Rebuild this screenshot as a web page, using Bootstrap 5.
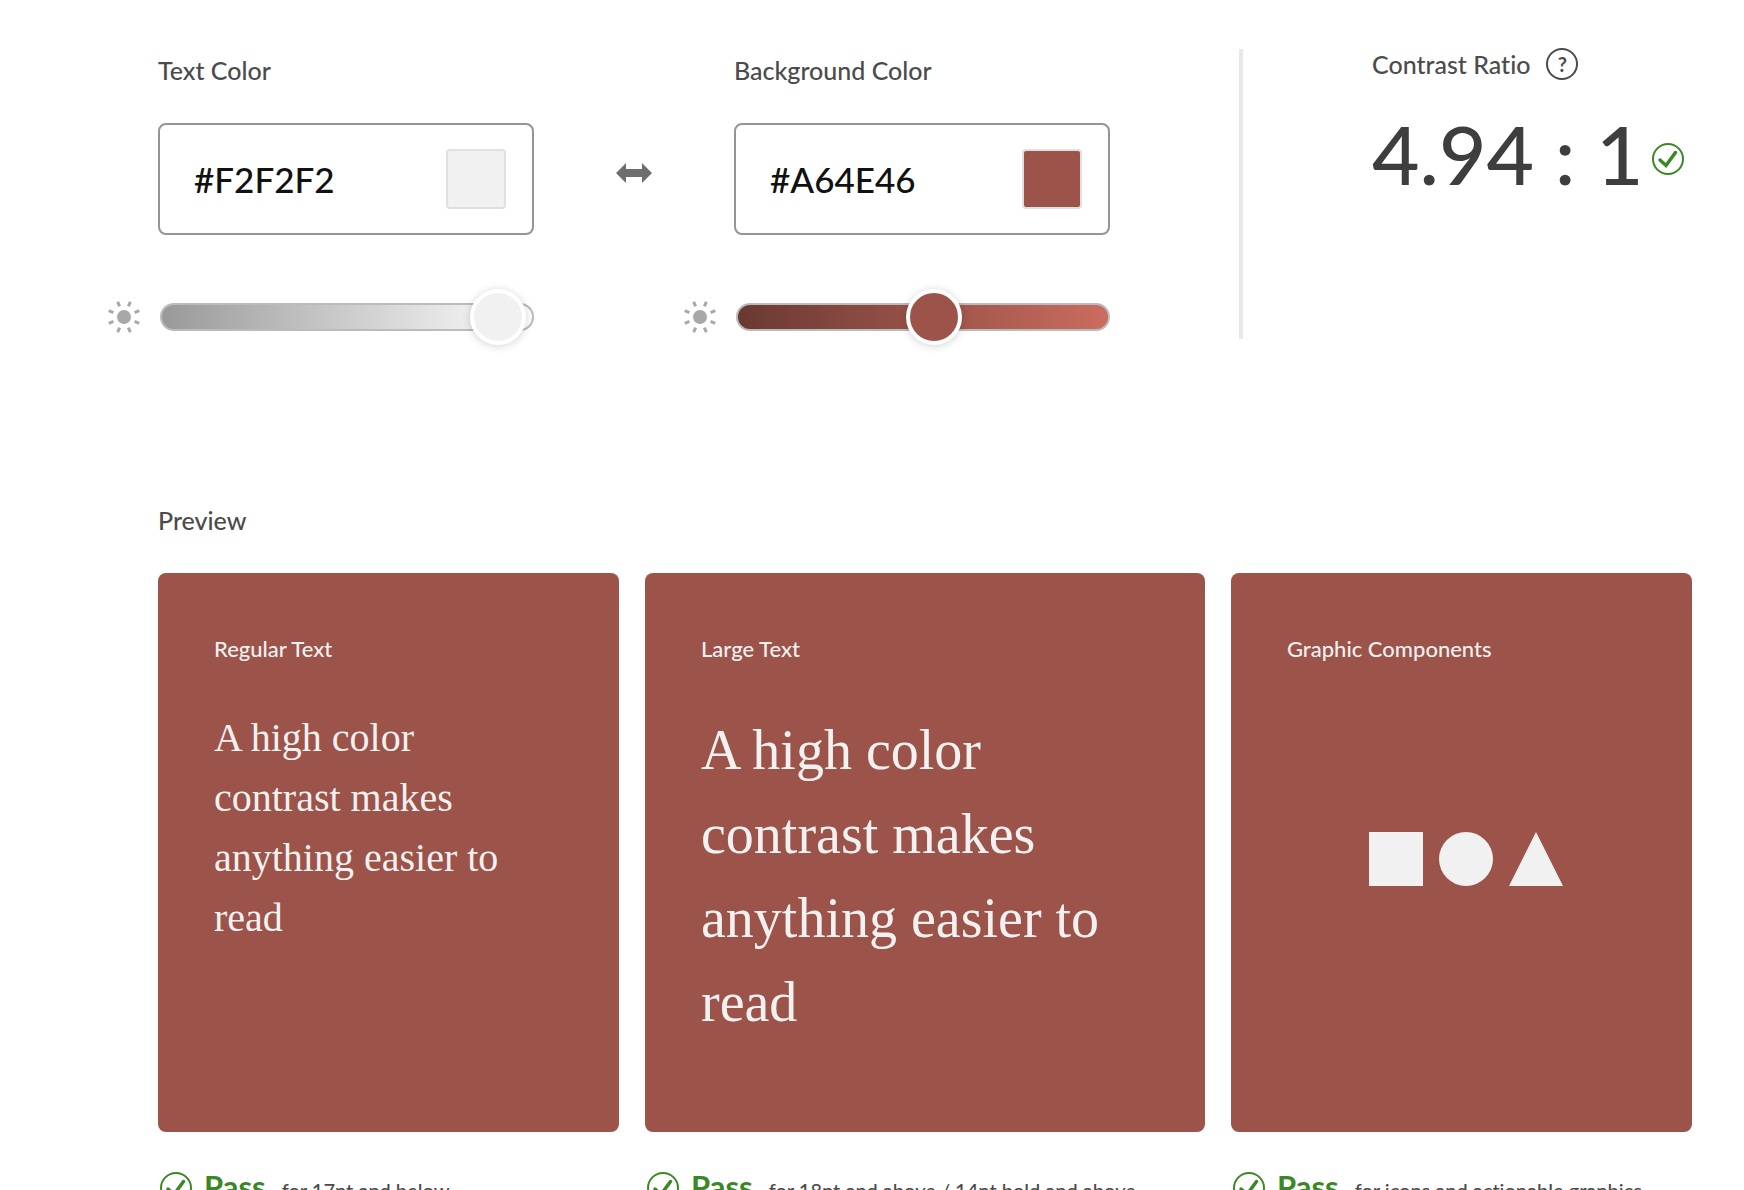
<!DOCTYPE html>
<html lang="en">
<head>
<meta charset="utf-8">
<meta name="viewport" content="width=device-width, initial-scale=1">
<title>Contrast Checker</title>
<link href="https://cdn.jsdelivr.net/npm/bootstrap@5.3.0/dist/css/bootstrap.min.css" rel="stylesheet">
<style>
  :root { --text-pick: #f1f1f1; --bg-pick: #9c5349; --pass: #3a8824; }
  body { font-family: Lato, "Open Sans", sans-serif; font-weight: 500; font-variant-ligatures: none; color: #4b4b4b; background: #fff; font-size: 20px; overflow-x: hidden; }
  .checker { padding: 49px 52px 24px 108px; }
  .controls { display: grid; grid-template-columns: 426fr 150px 426fr 129px 4px 129px 320fr; }
  .caption { font-size: 25px; line-height: 30px; font-weight: 500; margin: 0; }
  .picker .caption { line-height: 42px; margin: 0 0 32px 50px; display: block; }
  .hex-box { height: 112px; margin-left: 50px; padding: 0 26px 0 34px; border: 2px solid #959595; border-radius: 8px; }
  .hex-box .form-control { font-size: 35px; font-weight: 500; line-height: 48px; color: #111; border: 0; padding: 0; min-width: 0; box-shadow: none; background: transparent; }
  .swatch { width: 60px; height: 60px; padding: 0; border: 2px solid #e0e0e0; border-radius: 4px; flex: none; }
  .swatch-text { background: var(--text-pick); }
  .swatch-bg { background: var(--bg-pick); }
  .brightness { margin-top: 54px; gap: 20px; }
  .brightness svg { width: 32px; height: 32px; flex: none; }
  .form-range { height: 56px; flex: 1; min-width: 0; }
  .form-range::-webkit-slider-runnable-track { height: 28px; border: 2px solid #bbb; border-radius: 14px; background: var(--track); }
  .form-range::-webkit-slider-thumb { width: 56px; height: 56px; margin-top: -16px; border: 4px solid #fff; border-radius: 50%; background: var(--knob); box-shadow: 0 1px 8px rgba(0,0,0,.18); }
  .form-range::-webkit-slider-thumb:active { background: var(--knob); }
  .range-text { --track: linear-gradient(90deg, #999, #fff); --knob: var(--text-pick); }
  .range-bg { --track: linear-gradient(90deg, #693932, #cb6c5f); --knob: var(--bg-pick); }
  .swap { margin: 104px 0 0 50px; height: 40px; }
  .divider { background: #e8e8e8; margin-bottom: 6px; }
  .help { width: 32px; height: 32px; border: 2px solid #4b4b4b; border-radius: 50%; background: none; color: #4b4b4b; font-size: 20px; line-height: 28px; font-weight: 700; padding: 0; }
  .score-head { height: 30px; gap: 16px; }
  .score { margin-top: 24px; gap: 8px; }
  .score-value { font-size: 82px; line-height: 100px; color: #3e3e3e; white-space: nowrap; }
  .score svg { margin-top: 12px; }
  .check { width: 32px; height: 32px; flex: none; }
  .preview-title { margin: 160px 0 38px; }
  .preview { padding-left: 50px; }
  .tiles { display: grid; grid-template-columns: 461fr 560fr 461fr; gap: 38px 26px; }
  .tile { min-height: 559px; border-radius: 8px; padding: 57px 56px 82px; background: var(--bg-pick); color: var(--text-pick); }
  .tile-name { font-size: 22px; line-height: 38px; font-weight: 500; margin: 0; }
  .sample { font-family: "Liberation Serif", "Times New Roman", serif; font-weight: 400; line-height: 1.5; margin: 40px 0 0; }
  .sample-regular { font-size: 40px; padding-right: 56px; }
  .sample-large { font-size: 56px; }
  .shapes { gap: 16px; padding-left: 8px; }
  .shapes svg { width: 54px; height: 54px; fill: var(--text-pick); }
  .verdict { line-height: 32px; padding-left: 2px; }
  .verdict strong { font-size: 31px; color: var(--pass); margin: 0 16px 0 12px; }
</style>
</head>
<body>
<svg class="d-none" aria-hidden="true">
  <symbol id="ok" viewBox="0 0 32 32">
    <circle cx="16" cy="16" r="15" fill="none" stroke="#3a8824" stroke-width="2"/>
    <path d="M8 17l6 5.500L23.500 9.500" fill="none" stroke="#3a8824" stroke-width="3.500" stroke-linecap="round"/>
  </symbol>
  <symbol id="sun" viewBox="-16 -16 32 32">
    <circle r="7" fill="#a8a8a8"/>
    <g stroke="#a8a8a8" stroke-width="3">
      <path d="M11.500 0h5" transform="rotate(22.5)"/>
      <path d="M11.500 0h5" transform="rotate(67.5)"/>
      <path d="M11.500 0h5" transform="rotate(112.5)"/>
      <path d="M11.500 0h5" transform="rotate(157.5)"/>
      <path d="M11.500 0h5" transform="rotate(202.5)"/>
      <path d="M11.500 0h5" transform="rotate(247.5)"/>
      <path d="M11.500 0h5" transform="rotate(292.5)"/>
      <path d="M11.500 0h5" transform="rotate(337.5)"/>
    </g>
  </symbol>
</svg>
<main class="checker">
  <section class="controls">
    <div class="picker">
      <label class="caption" for="textHex">Text Color</label>
      <div class="hex-box d-flex align-items-center">
        <input class="form-control" id="textHex" type="text" value="#F2F2F2">
        <button class="swatch swatch-text" type="button" aria-label="Pick text color"></button>
      </div>
      <div class="brightness d-flex align-items-center">
        <svg aria-hidden="true"><use href="#sun"/></svg>
        <input class="form-range range-text" type="range" min="0" max="200" value="196" aria-label="Text brightness">
      </div>
    </div>
    <button class="swap btn p-0 border-0 d-flex align-items-center justify-content-center" type="button" aria-label="Swap colors">
      <svg width="36" height="20" viewBox="0 0 36 20" fill="#6e6e6e" aria-hidden="true"><path d="M0 10L10 0v6h16V0l10 10-10 10v-6H10v6z"/></svg>
    </button>
    <div class="picker">
      <label class="caption" for="bgHex">Background Color</label>
      <div class="hex-box d-flex align-items-center">
        <input class="form-control" id="bgHex" type="text" value="#A64E46">
        <button class="swatch swatch-bg" type="button" aria-label="Pick background color"></button>
      </div>
      <div class="brightness d-flex align-items-center">
        <svg aria-hidden="true"><use href="#sun"/></svg>
        <input class="form-range range-bg" type="range" min="0" max="200" value="107" aria-label="Background brightness">
      </div>
    </div>
    <span></span>
    <div class="divider"></div>
    <span></span>
    <div>
      <div class="score-head d-flex align-items-center">
        <h2 class="caption">Contrast Ratio</h2>
        <button class="help" type="button">?</button>
      </div>
      <div class="score d-flex align-items-center">
        <span class="score-value">4.94 : 1</span>
        <svg class="check" role="img" aria-label="Pass"><use href="#ok"/></svg>
      </div>
    </div>
  </section>

  <section class="preview">
    <h2 class="caption preview-title">Preview</h2>
    <div class="tiles">
      <article class="tile">
        <h3 class="tile-name">Regular Text</h3>
        <p class="sample sample-regular">A high color contrast makes anything easier to read</p>
      </article>
      <article class="tile">
        <h3 class="tile-name">Large Text</h3>
        <p class="sample sample-large">A high color contrast makes anything easier to read</p>
      </article>
      <article class="tile d-flex flex-column">
        <h3 class="tile-name">Graphic Components</h3>
        <div class="shapes d-flex flex-grow-1 align-items-center justify-content-center">
          <svg aria-hidden="true" viewBox="0 0 54 54"><rect width="54" height="54"/></svg>
          <svg aria-hidden="true" viewBox="0 0 54 54"><circle cx="27" cy="27" r="27"/></svg>
          <svg aria-hidden="true" viewBox="0 0 54 54"><path d="M27 0l27 54H0z"/></svg>
        </div>
      </article>
      <div class="verdict d-flex align-items-baseline">
        <svg class="check align-self-center" aria-hidden="true"><use href="#ok"/></svg><strong>Pass</strong><span>for 17pt and below</span>
      </div>
      <div class="verdict d-flex align-items-baseline">
        <svg class="check align-self-center" aria-hidden="true"><use href="#ok"/></svg><strong>Pass</strong><span>for 18pt and above / 14pt bold and above</span>
      </div>
      <div class="verdict d-flex align-items-baseline">
        <svg class="check align-self-center" aria-hidden="true"><use href="#ok"/></svg><strong>Pass</strong><span>for icons and actionable graphics</span>
      </div>
    </div>
  </section>
</main>
<script src="https://cdn.jsdelivr.net/npm/bootstrap@5.3.0/dist/js/bootstrap.bundle.min.js"></script>
</body>
</html>
